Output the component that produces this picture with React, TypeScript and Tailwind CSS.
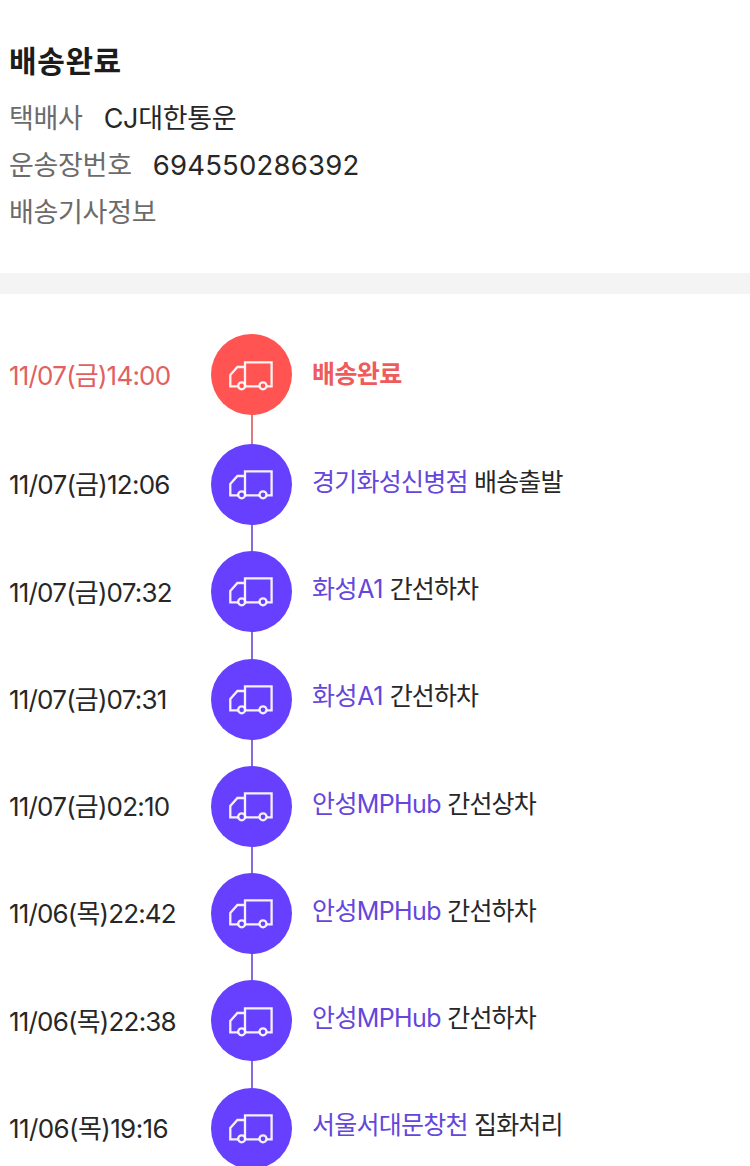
type Step = {
  time: string;
  place?: string;
  status: string;
  row: string;
  icon: string;
  timeClass: string;
  textPad: string;
  placeClass?: string;
  done?: boolean;
};

const steps: Step[] = [
  { time: '11/07(금)14:00', status: '배송완료', row: 'h-[110.5px]', icon: 'pt-[27px]', timeClass: 'pt-[23px] tracking-[-0.8px]', textPad: 'pt-[21.5px]', done: true },
  { time: '11/07(금)12:06', place: '경기화성신병점', placeClass: 'tracking-[-0.75px]', status: '배송출발', row: 'h-[107px]', icon: 'pt-[26px]', timeClass: 'pt-[22px] tracking-[-0.75px]', textPad: 'pt-[19px]' },
  { time: '11/07(금)07:32', place: '화성A1', placeClass: 'tracking-[-0.4px]', status: '간선하차', row: 'h-[108px]', icon: 'pt-[26px]', timeClass: 'pt-[23px] tracking-[-0.8px]', textPad: 'pt-[19px]' },
  { time: '11/07(금)07:31', place: '화성A1', placeClass: 'tracking-[-0.4px]', status: '간선하차', row: 'h-[107px]', icon: 'pt-[26px]', timeClass: 'pt-[22px] tracking-[-0.8px]', textPad: 'pt-[18px]' },
  { time: '11/07(금)02:10', place: '안성MPHub', placeClass: 'tracking-[-0.62px]', status: '간선상차', row: 'h-[107px]', icon: 'pt-[26px]', timeClass: 'pt-[22px] tracking-[-0.8px]', textPad: 'pt-[19px]' },
  { time: '11/06(목)22:42', place: '안성MPHub', placeClass: 'tracking-[-0.62px]', status: '간선하차', row: 'h-[107px]', icon: 'pt-[26px]', timeClass: 'pt-[22px] tracking-[-0.85px]', textPad: 'pt-[19px]' },
  { time: '11/06(목)22:38', place: '안성MPHub', placeClass: 'tracking-[-0.62px]', status: '간선하차', row: 'h-[108px]', icon: 'pt-[27px]', timeClass: 'pt-[23px] tracking-[-0.8px]', textPad: 'pt-[19px]' },
  { time: '11/06(목)19:16', place: '서울서대문창천', placeClass: 'tracking-[-0.75px]', status: '집화처리', row: 'h-[108px]', icon: 'pt-[26px]', timeClass: 'pt-[22px] tracking-[-0.6px]', textPad: 'pt-[18px]' },
];

function Truck() {
  return (
    <svg className="mr-[2px]" width="44" height="30" viewBox="0 0 44 30" fill="none" stroke="#fff" strokeOpacity="0.93" strokeWidth="2.3">
      <path d="M16 25.3V1.3H42.6V25.3H37.6M30.4 25.3H16.3M16 6H8.4L1.3 14V25.3H9" />
      <circle cx="12.7" cy="24.8" r="3.5" />
      <circle cx="34" cy="24.8" r="3.5" />
    </svg>
  );
}

export default function App() {
  return (
    <main className="h-[1166px] w-[750px] overflow-hidden bg-white font-['Inter','Noto_Sans_CJK_KR',sans-serif] text-[#272727]">
      <header className="flex h-[273px] flex-col pl-[9px] pt-[38px] text-[27px] leading-[47px] whitespace-nowrap">
        <h1 className="h-[57px] text-[30px] leading-[46px] font-bold tracking-[0.6px] text-[#1c1c1c]">배송완료</h1>
        <div className="flex gap-[21px]">
          <span className="tracking-[-0.3px] text-[#6b6b6b]">택배사</span>
          <span className="tracking-[-0.3px]">CJ대한통운</span>
        </div>
        <div className="flex h-[47px] gap-[21px]">
          <span className="tracking-[-0.3px] text-[#6b6b6b]">운송장번호</span>
          <span className="text-[27.5px] leading-[46px] tracking-[0.2px]">694550286392</span>
        </div>
        <div className="tracking-[-0.3px] text-[#6b6b6b]">배송기사정보</div>
      </header>
      <div className="h-[20.5px] bg-[#f4f4f4]" />
      <ol className="pt-[40px]">
        {steps.map((s) => (
          <li key={s.time} className={`flex whitespace-nowrap ${s.row}`}>
            <time className={`w-[211px] shrink-0 pl-[9px] text-[26px] leading-[38px] ${s.timeClass} ${s.done ? 'text-[#e26060]' : ''}`}>
              {s.time}
            </time>
            <div className="flex w-[81px] shrink-0 flex-col items-center">
              <div className={`flex size-[81px] shrink-0 justify-center ${s.icon} rounded-full ${s.done ? 'bg-[#ff5452]' : 'bg-[#6740ff]'}`}>
                <Truck />
              </div>
              <div className={`w-[2px] flex-1 ${s.done ? 'bg-[#dd7a7b]' : 'bg-[#866cd6]'}`} />
            </div>
            <p className={`pl-[20px] text-[25px] leading-[38px] ${s.textPad} ${s.done ? 'font-bold tracking-[-0.6px] text-[#ef5b5b]' : 'tracking-[-0.85px]'}`}>
              {s.place && <span className={`text-[#6546dc] ${s.placeClass}`}>{s.place} </span>}
              {s.status}
            </p>
          </li>
        ))}
      </ol>
    </main>
  );
}
